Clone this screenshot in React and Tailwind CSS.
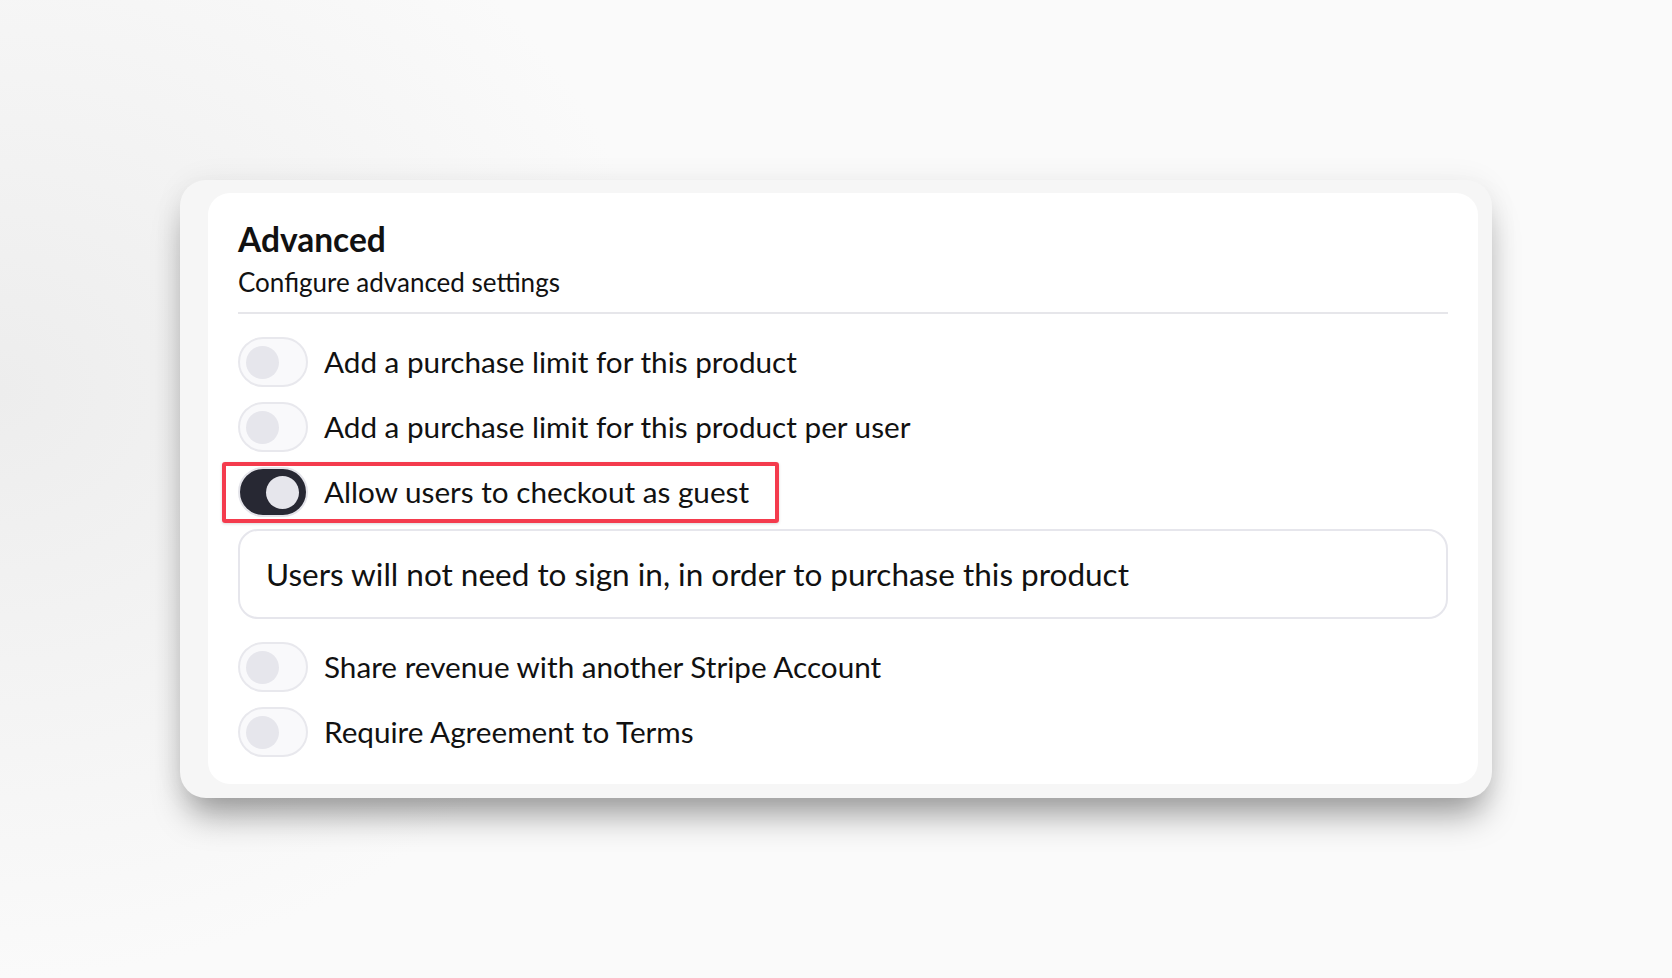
import React from 'react';

const OPTIONS = [
  { id: 'limit', label: 'Add a purchase limit for this product', on: false },
  { id: 'limit_user', label: 'Add a purchase limit for this product per user', on: false },
  { id: 'guest', label: 'Allow users to checkout as guest', on: true, highlight: true, note: 'Users will not need to sign in, in order to purchase this product' },
  { id: 'revenue', label: 'Share revenue with another Stripe Account', on: false },
  { id: 'terms', label: 'Require Agreement to Terms', on: false },
];

function Toggle({ on }) {
  return (
    <div className={`w-[70px] h-[50px] shrink-0 rounded-full border-2 flex items-center ${on ? 'bg-[#272833] border-[#e4e4ea] justify-end pr-[7px]' : 'bg-[#f9f9fb] border-[#e8e8ed] justify-start pl-[6px]'}`}>
      <div className="w-[33px] h-[33px] rounded-full bg-[#e6e6ec]" />
    </div>
  );
}

export default function App() {
  return (
    <div className="w-[1672px] h-[978px] overflow-hidden bg-[radial-gradient(ellipse_40%_60%_at_0%_40%,#ededed_0%,#fafafa_100%)] pt-[180px] pl-[180px] font-['Lato',sans-serif] text-[#111111]">
      <div className="w-[1312px] rounded-[26px] bg-[#f6f6f6] pl-[28px] pr-[14px] pt-[13px] pb-[14px] shadow-[0_24px_34px_-8px_rgba(0,0,0,0.38),0_0_30px_rgba(0,0,0,0.06)]">
        <div className="rounded-[22px] bg-white px-[30px] pt-[26px] pb-[27px]">
          <h1 className="text-[33.5px] leading-[40px] font-bold">Advanced</h1>
          <p className="text-[26px] leading-[32px] mt-[7px]">Configure advanced settings</p>
          <div className="h-[2px] bg-[#e6e6ea] mt-[14px] mb-[23px]" />
          <div className="flex flex-col">
            {OPTIONS.map((opt, i) => (
              <div key={opt.id} className={i > 0 && !OPTIONS[i - 1].note ? 'mt-[15px]' : i > 0 ? 'mt-[23px]' : ''}>
                <div className="relative flex items-center gap-[16px]">
                  <Toggle on={opt.on} />
                  <span className="text-[29.7px] leading-[36px]">{opt.label}</span>
                  {opt.highlight && (
                    <div className="absolute left-[-16px] top-[-5px] w-[557px] h-[61px] border-[4px] border-[#f43b4d] rounded-[3px] shadow-[0_1px_3px_rgba(0,0,0,0.15)]" />
                  )}
                </div>
                {opt.note && (
                  <div className="mt-[12px] h-[90px] rounded-[20px] border-2 border-[#e6e6ec] flex items-center px-[26px]">
                    <span className="text-[31.5px] leading-[38px]">{opt.note}</span>
                  </div>
                )}
              </div>
            ))}
          </div>
        </div>
      </div>
    </div>
  );
}
